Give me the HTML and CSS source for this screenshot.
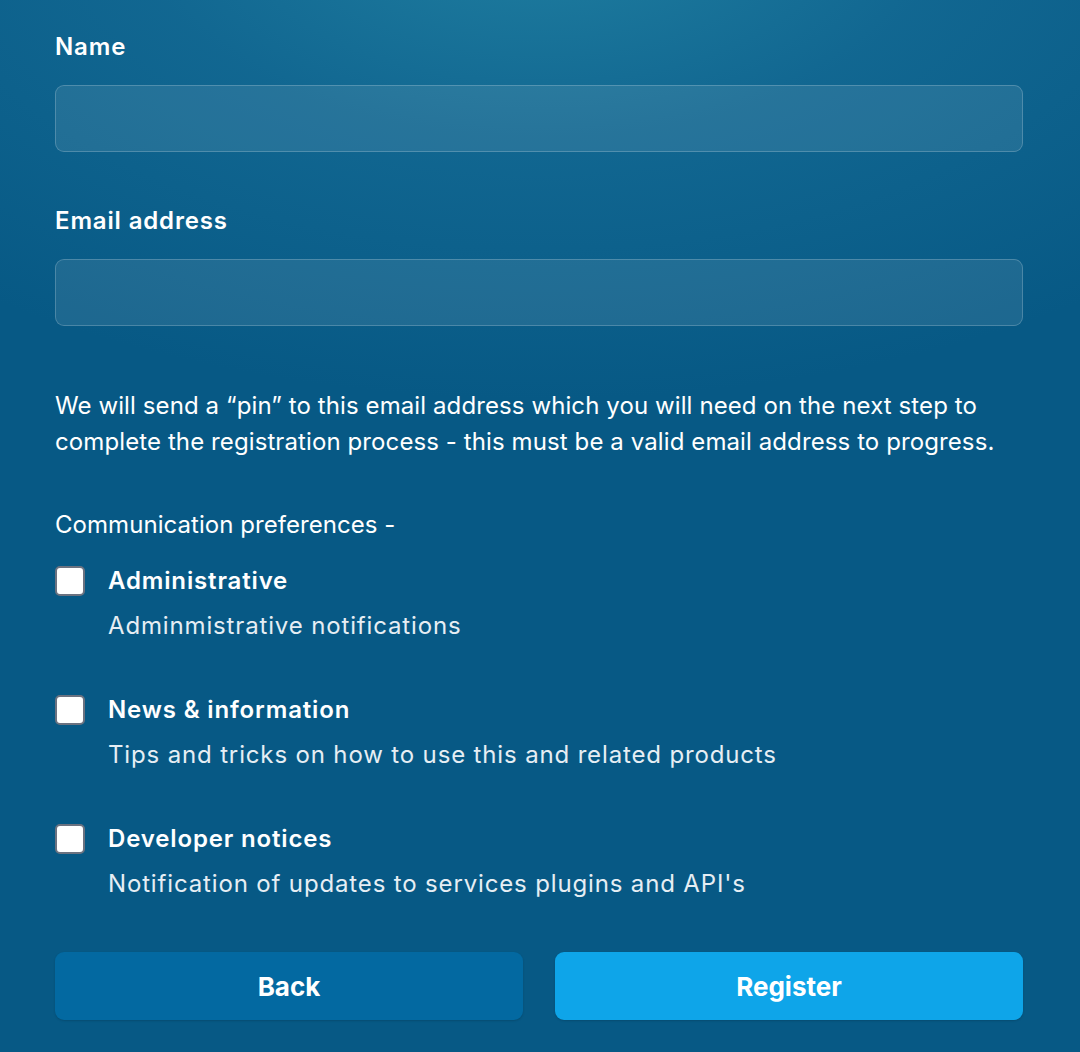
FILE: index.html
```html
<!DOCTYPE html>
<html lang="en">
<head>
<meta charset="utf-8">
<link rel="stylesheet" href="styles.css">
</head>
<body>
<form class="form">
  <div class="field">
    <label class="label" for="name">Name</label>
    <input class="input" id="name" type="text">
  </div>
  <div class="field">
    <label class="label" for="email">Email address</label>
    <input class="input" id="email" type="email">
  </div>
  <p class="note">We will send a “pin” to this email address which you will need on the next step to complete the registration process - this must be a valid email address to progress.</p>
  <p class="prefs-title">Communication preferences -</p>
  <div class="prefs">
    <label class="pref">
      <span class="box"></span>
      <span class="pref-text">
        <span class="pref-name">Administrative</span>
        <span class="pref-desc">Adminmistrative notifications</span>
      </span>
    </label>
    <label class="pref">
      <span class="box"></span>
      <span class="pref-text">
        <span class="pref-name">News &amp; information</span>
        <span class="pref-desc">Tips and tricks on how to use this and related products</span>
      </span>
    </label>
    <label class="pref">
      <span class="box"></span>
      <span class="pref-text">
        <span class="pref-name">Developer notices</span>
        <span class="pref-desc">Notification of updates to services plugins and API's</span>
      </span>
    </label>
  </div>
  <div class="actions">
    <button type="button" class="btn btn-back">Back</button>
    <button type="button" class="btn btn-register">Register</button>
  </div>
</form>
</body>
</html>
```
FILE: styles.css
```css
html, body {
  margin: 0;
  height: 100%;
}
body {
  font-family: Inter, "Noto Sans", sans-serif;
  color: #fff;
  background-color: #075985;
  background-image: radial-gradient(ellipse 900px 480px at 50% -80px, rgba(40,140,170,0.75) 0%, rgba(30,120,160,0.45) 45%, rgba(7,89,133,0) 100%);
  background-repeat: no-repeat;
  overflow: hidden;
  letter-spacing: 0.85px;
}
.form {
  padding: 30px 57px 0 55px;
  display: flex;
  flex-direction: column;
}
.field {
  display: flex;
  flex-direction: column;
  gap: 21px;
  margin-bottom: 52px;
}
.label {
  font-size: 24px;
  font-weight: 600;
  line-height: 34px;
}
.input {
  height: 67px;
  box-sizing: border-box;
  border-radius: 9px;
  border: 1.5px solid rgba(255,255,255,0.2);
  background: rgba(255,255,255,0.09);
  margin: 0;
}
.note {
  margin: 10px 0 0;
  font-size: 24px;
  line-height: 36px;
  letter-spacing: 0.1px;
}
.prefs-title {
  margin: 47px 0 0;
  font-size: 24px;
  line-height: 36px;
  letter-spacing: 0.05px;
}
.prefs {
  display: flex;
  flex-direction: column;
  gap: 51px;
  margin-top: 23px;
}
.pref {
  display: flex;
  gap: 23px;
}
.box {
  width: 30px;
  height: 30px;
  box-sizing: border-box;
  background: #fff;
  border: 2px solid #6b7280;
  border-radius: 5px;
  flex: none;
}
.pref-text {
  display: flex;
  flex-direction: column;
  gap: 12px;
}
.pref-name {
  font-size: 24px;
  font-weight: 600;
  line-height: 30px;
}
.pref-desc {
  font-size: 24px;
  line-height: 36px;
  color: #e6eef4;
}
.actions {
  display: grid;
  grid-template-columns: 1fr 1fr;
  gap: 32px;
  margin-top: 50px;
}
.btn {
  height: 68px;
  border: none;
  border-radius: 9px;
  color: #fff;
  font-family: Inter, "Noto Sans", sans-serif;
  font-size: 26px;
  font-weight: 700;
  letter-spacing: 0;
  box-shadow: 0 1px 2px rgba(0,0,0,0.15);
}
.btn-back {
  background: #0369a1;
}
.btn-register {
  background: #0ea5e9;
}
```
